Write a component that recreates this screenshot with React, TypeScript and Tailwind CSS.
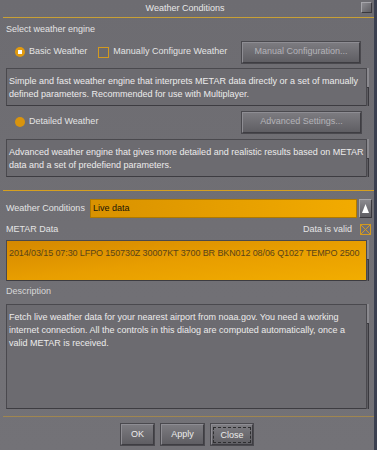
const Btn = ({ label, w, dim = false, dashed = false }: { label: string; w: string; dim?: boolean; dashed?: boolean }) => (
  <div
    className={`${w} h-[21px] flex items-center justify-center border border-t-[#8e8d93] border-l-[#8e8d93] border-r-[#3e3d42] border-b-[#3e3d42] bg-gradient-to-b from-[#7c7b80] to-[#5f5e63] shadow-[0_0_0_1px_#4a494e]`}
  >
    <span
      className={`${dim ? "text-[#b4b3b8]" : "text-[#ececec]"} ${
        dashed ? "border border-dashed border-[#2e2e30] px-[6px] leading-[14px]" : ""
      }`}
    >
      {label}
    </span>
  </div>
)

const TextBox = ({ h, children, orange = false }: { h: string; children: React.ReactNode; orange?: boolean }) => (
  <div className={`flex ${h} ml-[6px] mr-[5px]`}>
    <div
      className={`flex-1 min-w-0 whitespace-nowrap overflow-hidden border border-t-[#4a494e] border-l-[#4a494e] border-b-[#3d3c41] border-r-0 px-[2px] pt-[6px] leading-[13px] ${
        orange
          ? "bg-gradient-to-br from-[#d48800] via-[#e89e00] to-[#f2ad00] text-[#5a4418] tracking-[-0.1px]"
          : "bg-[#6c6b70] text-[#ececec]"
      }`}
    >
      {children}
    </div>
    <div className="w-[3px] flex flex-col border-l border-[#4a494e] bg-[#5d5c61]">
      <div className="h-[20px] bg-[#8a898e] border-b border-[#3a393e]" />
      <div className="flex-1 border-r border-[#3a393e]" />
    </div>
  </div>
)

export default function App() {
  return (
    <div
      className="w-[377px] h-[450px] flex flex-col bg-gradient-to-b from-[#6d6c71] to-[#737277] border-r-[3px] border-[#3b4050] text-[9px] text-[#e4e4e4] overflow-hidden"
      style={{ fontFamily: '"Liberation Sans", Arial, sans-serif' }}
    >
      {/* title bar */}
      <div className="h-[17px] flex items-center relative">
        <div className="flex-1 text-center text-[#e8e8e8] pr-[4px]">Weather Conditions</div>
        <div className="absolute right-[2px] top-[2px] w-[11px] h-[11px] border border-t-[#a6a5aa] border-l-[#a6a5aa] border-r-[#3a393e] border-b-[#3a393e] bg-gradient-to-br from-[#8d8c91] to-[#5e5d62]" />
      </div>
      <div className="h-px ml-[3px] bg-[#c8a035]" />

      <div className="h-[22px] flex items-center pl-[6px] pt-[2px]">Select weather engine</div>

      <div className="h-[24px] flex items-center">
        <div className="ml-[15px] w-[10px] h-[10px] rounded-full bg-[#e09a10] flex items-center justify-center">
          <div className="w-[4px] h-[4px] bg-white" />
        </div>
        <span className="ml-[4px]">Basic Weather</span>
        <div className="ml-[11px] w-[11px] h-[11px] border border-[#d39a20] bg-[#6a696e]" />
        <span className="ml-[4px]">Manually Configure Weather</span>
        <div className="ml-auto mr-[14px]">
          <Btn label="Manual Configuration..." w="w-[118px]" dim />
        </div>
      </div>

      <div className="mt-[4px]">
        <TextBox h="h-[38px]">
          Simple and fast weather engine that interprets METAR data directly or a set of manually
          <br />
          defined parameters. Recommended for use with Multiplayer.
        </TextBox>
      </div>

      <div className="h-[24px] mt-[4px] flex items-center">
        <div className="ml-[15px] w-[10px] h-[10px] rounded-full bg-[#d8940e]" />
        <span className="ml-[4px]">Detailed Weather</span>
        <div className="ml-auto mr-[13px]">
          <Btn label="Advanced Settings..." w="w-[119px]" dim />
        </div>
      </div>

      <div className="mt-[5px]">
        <TextBox h="h-[38px]">
          Advanced weather engine that gives more detailed and realistic results based on METAR
          <br />
          data and a set of predefiend parameters.
        </TextBox>
      </div>

      <div className="h-px ml-[3px] mt-[13px] bg-[#d6a020]" />

      <div className="h-[19px] mt-[8px] flex items-center">
        <span className="ml-[6px] w-[84px]">Weather Conditions</span>
        <div className="w-[267px] h-[19px] border border-[#b07a00] bg-gradient-to-r from-[#d99200] to-[#f2ab00] flex items-center pl-[2px] text-[#1a1408]">
          Live data
        </div>
        <div className="ml-[2px] w-[13px] h-[19px] border border-t-[#a5a4a9] border-l-[#a5a4a9] border-r-[#3a393e] border-b-[#3a393e] bg-gradient-to-b from-[#8a898e] to-[#5e5d62] flex items-center justify-center">
          <svg width="7" height="9" viewBox="0 0 7 9">
            <polygon points="3.5,0 7,9 0,9" fill="#ffffff" />
          </svg>
        </div>
      </div>

      <div className="h-[21px] mt-[1px] flex items-center">
        <span className="ml-[6px]">METAR Data</span>
        <span className="ml-auto">Data is valid</span>
        <div className="ml-[8px] mr-[3px] w-[11px] h-[11px] border border-[#d39a20] relative">
          <svg className="absolute inset-0" width="9" height="9" viewBox="0 0 9 9">
            <path d="M0 0 L9 9 M9 0 L0 9" stroke="#d39a20" strokeWidth="1" />
          </svg>
        </div>
      </div>

      <TextBox h="h-[41px]" orange>
        2014/03/15 07:30 LFPO 150730Z 30007KT 3700 BR BKN012 08/06 Q1027 TEMPO 2500
      </TextBox>

      <div className="h-[18px] mt-[2px] flex items-center pl-[6px] text-[#d8d8d8]">Description</div>

      <div className="mt-[3px]">
        <TextBox h="h-[105px]">
          Fetch live weather data for your nearest airport from noaa.gov. You need a working
          <br />
          internet connection. All the controls in this dialog are computed automatically, once a
          <br />
          valid METAR is received.
        </TextBox>
      </div>

      <div className="h-px ml-[3px] mt-[7px] bg-[#a08650]" />

      <div className="mt-[7px] flex justify-center gap-[7px]">
        <Btn label="OK" w="w-[33px]" />
        <Btn label="Apply" w="w-[43px]" />
        <Btn label="Close" w="w-[42px]" dashed />
      </div>
    </div>
  )
}
